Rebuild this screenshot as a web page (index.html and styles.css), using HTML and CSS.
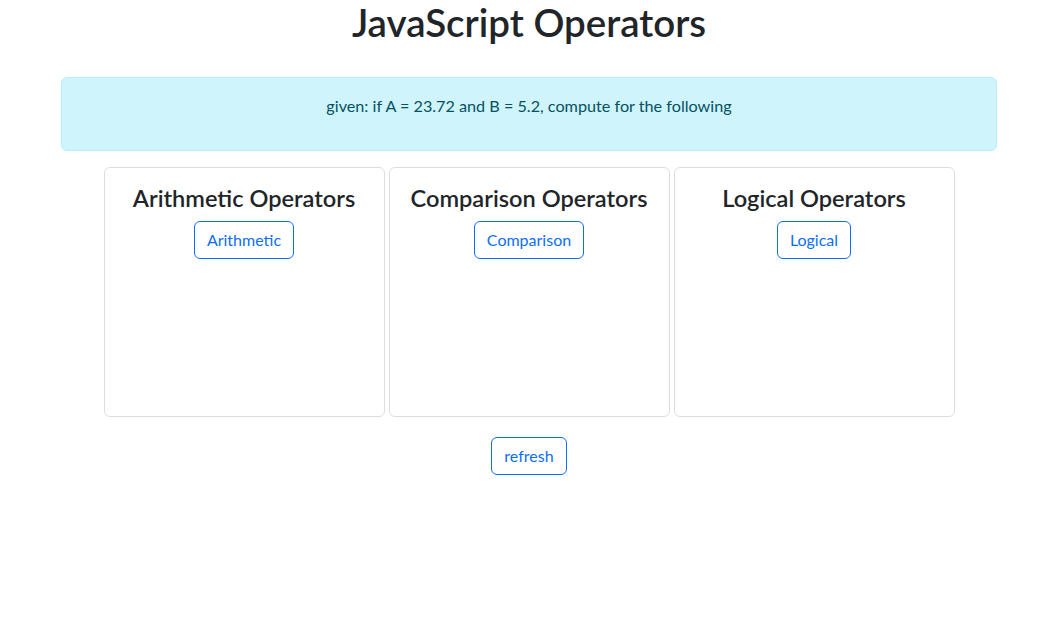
FILE: index.html
```html
<!DOCTYPE html>
<html lang="en">
<head>
<meta charset="utf-8">
<title>JavaScript Operators</title>
<link rel="stylesheet" href="styles.css">
</head>
<body>
<div class="page">
  <h1 class="title">JavaScript Operators</h1>
  <div class="alert">
    <p>given: if A = 23.72 and B = 5.2, compute for the following</p>
  </div>
  <div class="cards">
    <div class="card">
      <h4 class="card-title">Arithmetic Operators</h4>
      <button class="btn">Arithmetic</button>
    </div>
    <div class="card">
      <h4 class="card-title">Comparison Operators</h4>
      <button class="btn">Comparison</button>
    </div>
    <div class="card">
      <h4 class="card-title">Logical Operators</h4>
      <button class="btn">Logical</button>
    </div>
  </div>
  <div class="actions">
    <button class="btn">refresh</button>
  </div>
</div>
</body>
</html>
```

FILE: styles.css
```css
* { box-sizing: border-box; }

body {
  margin: 0;
  padding-left: 7px;
  font-family: Lato, "Open Sans", "Liberation Sans", sans-serif;
  font-size: 16px;
  line-height: 1.5;
  color: #212529;
  background: #fff;
}

.page {
  width: 936px;
  margin: 0 auto;
}

.title {
  margin: 0 0 32px;
  font-size: 38.5px;
  line-height: 1.18;
  font-weight: 600;
  text-align: center;
}

.alert {
  height: 74px;
  padding: 16px;
  margin-bottom: 16px;
  border: 1px solid #b6effb;
  border-radius: 6px;
  background: #cff4fc;
  color: #055160;
  text-align: center;
}

.alert p {
  margin: 0;
  font-size: 16.2px;
  line-height: 24px;
}

.cards {
  display: flex;
  justify-content: center;
  gap: 4px;
}

.card {
  width: 281px;
  height: 250px;
  padding: 16px;
  border: 1px solid #dedede;
  border-radius: 6px;
  text-align: center;
  display: flex;
  flex-direction: column;
  align-items: center;
}

.card-title {
  margin: 0 0 8px;
  font-size: 23.6px;
  line-height: 1.2;
  font-weight: 600;
}

.btn {
  font-family: inherit;
  font-size: 16px;
  line-height: 1.5;
  padding: 6px 12px;
  color: #0d6efd;
  background: transparent;
  border: 1px solid #0d6efd;
  border-radius: 6px;
  cursor: pointer;
}

.actions {
  margin-top: 20px;
  text-align: center;
}
```
